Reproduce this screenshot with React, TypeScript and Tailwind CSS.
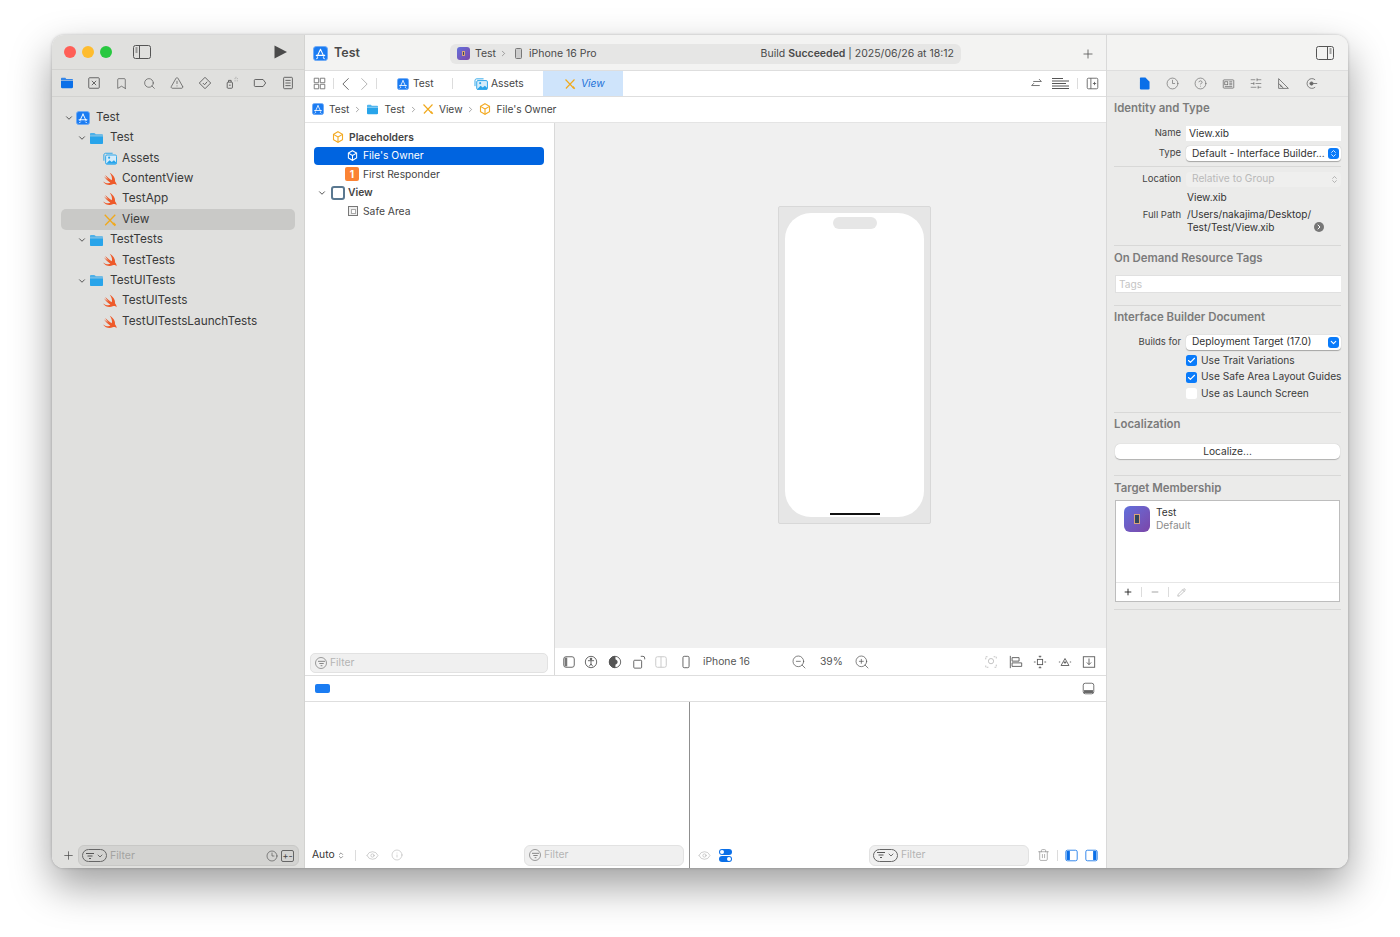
import {
  Bookmark,
  Check,
  ChevronDown,
  ChevronRight,
  ChevronsUpDown,
  CircleHelp,
  Clock3,
  Eye,
  Info,
  Minus,
  Pencil,
  Plus,
  Search,
  SlidersHorizontal,
  Trash2,
  TriangleAlert,
  ZoomIn,
  ZoomOut,
} from 'lucide-react';

type IconProps = { className?: string };

// --- drawn icons ---
const AppIcon = ({ className = 'w-[14px] h-[14px]' }: IconProps) => (
  <svg viewBox="0 0 16 16" className={`${className} shrink-0`}>
    <rect x="0.5" y="0.5" width="15" height="15" rx="3" fill="#1b7cf2" stroke="#6eaaf5" />
    <path d="M8 3.5 4.5 11M8 3.5l3.5 7.5M3.5 10h9M5 12.5l-1 1M11 12.5l1 1" stroke="#fff" strokeWidth="1.1" fill="none" strokeLinecap="round" />
  </svg>
);

const FolderIcon = ({ className = 'w-[15px] h-[13px]', fill = '#28a4ea' }: IconProps & { fill?: string }) => (
  <svg viewBox="0 0 16 14" className={`${className} shrink-0`}>
    <path d="M1 3V2.2C1 1.5 1.5 1 2.2 1h3.2c.5 0 .8.2 1.1.5l.7.8H14c.6 0 1 .4 1 1V4H1z" fill={fill} opacity="0.8" />
    <path d="M1 4.6h14v7.2c0 .7-.5 1.2-1.2 1.2H2.2C1.500 13 1 12.500 1 11.800z" fill={fill} />
  </svg>
);

const AssetsIcon = ({ className = 'w-[14px] h-[13px]' }: IconProps) => (
  <svg viewBox="0 0 16 14" className={`${className} shrink-0`} fill="none" stroke="#28a4ea" strokeWidth="1.1">
    <path d="M1 9.500V3c0-1 .7-2 1.800-2H11" />
    <rect x="3" y="3" width="12.500" height="10.500" rx="1.500" fill="#d5ecfa" />
    <path d="M3.500 13l4-4 2.500 2 2.500-2 2.500 2.500V13z" fill="#28a4ea" stroke="none" />
    <circle cx="7" cy="6" r="1.200" fill="#28a4ea" stroke="none" />
  </svg>
);

const SwiftIcon = ({ className = 'w-[14px] h-[14px]' }: IconProps) => (
  <svg viewBox="0.5 1 14.500 14" className={`${className} shrink-0`}>
    <path
      d="M.5 10.500C3.500 12.500 6 12.800 8.200 12 5.500 10 3 7.500 1.500 5.200 3.500 7 5.500 8.500 7 9.300 5.200 7.800 3.600 5.800 2.800 3.800 5 6 7.500 8 9.600 9.300 10.300 7 9.500 4.300 7.500 1.500c3.500 2 6 5.500 5.400 8.800 1.100 1.200 1.900 2.700 1.600 4.200-1-1.500-2.500-1.700-4-1-3.500 1.500-7.500.5-10-3z"
      fill="#ee5a2a"
    />
  </svg>
);

const XibIcon = ({ className = 'w-[14px] h-[14px]' }: IconProps) => (
  <svg viewBox="0 0 16 16" className={`${className} shrink-0`} fill="none" stroke="#f0a91d">
    <path d="M2 2l9.500 10" strokeWidth="1.500" />
    <path d="M14 2 2.500 14" strokeWidth="1.500" />
    <path d="M10.500 12.500l2-2 2.500 3-1.500 1.500z" fill="#f0a91d" stroke="none" />
  </svg>
);

const OwnerIcon = ({ className = 'w-[12px] h-[12px]', color = '#f3ab25' }: IconProps & { color?: string }) => (
  <svg viewBox="0 0 16 16" className={`${className} shrink-0`} fill="none" stroke={color} strokeWidth="1.500">
    <path d="M8 1l6 3.500v7L8 15l-6-3.500v-7z" />
    <path d="M8 8V15M8 8 2 4.500M8 8l6-3.500" />
  </svg>
);

const PanelIcon = ({ side, className = 'w-[18px] h-[14px]' }: IconProps & { side: 'left' | 'right' }) => (
  <svg viewBox="0 0 18 14" className={`${className} shrink-0`} fill="none" stroke="#555" strokeWidth="1">
    <rect x="0.500" y="0.500" width="17" height="13" rx="2" />
    {side === 'left' ? <path d="M6.500 0.500v13M2.500 3h2M2.500 5h2M2.500 7h2" /> : <path d="M11.500 0.500v13M13.500 3h2M13.500 5h2M13.500 7h2" />}
  </svg>
);

const TinyPhoneApp = ({ className }: IconProps) => (
  <div className={`${className} bg-gradient-to-br from-[#5f6fdc] to-[#7b45a8] flex items-center justify-center shrink-0`}>
    <div className="w-[25%] h-[36%] bg-[#32465c] border border-[#d9a27a]" />
  </div>
);

const Stroke = ({ children, className = 'w-[14px] h-[14px]', vb = '0 0 16 16', color = '#555' }: IconProps & { children: React.ReactNode; vb?: string; color?: string }) => (
  <svg viewBox={vb} className={`${className} shrink-0`} fill="none" stroke={color} strokeWidth="1">
    {children}
  </svg>
);

const FilterPill = () => (
  <div className="w-[25px] h-[13px] rounded-full border border-[#666] flex items-center justify-center gap-[2px] shrink-0">
    <Stroke className="w-[8px] h-[8px]" vb="0 0 8 8" color="#555">
      <path d="M0 1.500h8M1.500 4h5M3 6.500h2" />
    </Stroke>
    <ChevronDown className="w-[8px] h-[8px] text-[#555]" strokeWidth={2.5} />
  </div>
);

const RoundFilter = () => (
  <div className="w-[12px] h-[12px] rounded-full border border-[#9a9a9a] flex items-center justify-center shrink-0">
    <Stroke className="w-[7px] h-[7px]" vb="0 0 8 8" color="#777">
      <path d="M0 1.500h8M1.500 4h5M3 6.500h2" />
    </Stroke>
  </div>
);

// --- left navigator ---
const treeRows = [
  { level: 0, name: 'Test', icon: <AppIcon /> },
  { level: 1, name: 'Test', icon: <FolderIcon /> },
  { level: 2, name: 'Assets', icon: <AssetsIcon /> },
  { level: 2, name: 'ContentView', icon: <SwiftIcon /> },
  { level: 2, name: 'TestApp', icon: <SwiftIcon /> },
  { level: 2, name: 'View', icon: <XibIcon />, selected: true },
  { level: 1, name: 'TestTests', icon: <FolderIcon /> },
  { level: 2, name: 'TestTests', icon: <SwiftIcon /> },
  { level: 1, name: 'TestUITests', icon: <FolderIcon /> },
  { level: 2, name: 'TestUITests', icon: <SwiftIcon /> },
  { level: 2, name: 'TestUITestsLaunchTests', icon: <SwiftIcon /> },
];

const levelClass = ['pl-[4px]', 'pl-[17px]', 'pl-[42px]'];

const Navigator = () => (
  <aside className="w-[253px] shrink-0 bg-[#e0e0de] flex flex-col border-r border-[#d3d3d1]">
    <div className="h-[35px] shrink-0 flex items-center pl-[12px] border-b border-[#d2d2d0]">
      <div className="w-[12px] h-[12px] rounded-full bg-[#ff5f57]" />
      <div className="w-[12px] h-[12px] rounded-full bg-[#febc2e] ml-[6px]" />
      <div className="w-[12px] h-[12px] rounded-full bg-[#28c840] ml-[6px]" />
      <div className="ml-[21px]">
        <PanelIcon side="left" />
      </div>
      <svg viewBox="0 0 13 14" className="w-[13px] h-[14px] ml-auto mr-[17px]">
        <path d="M.5.500 13 7 .5 13.500z" fill="#4a4a4a" />
      </svg>
    </div>
    <div className="h-[27px] shrink-0 flex items-center pl-[1px] border-b border-[#d2d2d0]">
      <div className="w-[27.600px] flex justify-center">
        <FolderIcon className="w-[14px] h-[12px]" fill="#0a6fe8" />
      </div>
      <div className="w-[27.600px] flex justify-center">
        <Stroke>
          <rect x="2" y="2" width="12" height="12" rx="1" />
          <path d="M5.500 5.500l5 5M10.500 5.500l-5 5" />
        </Stroke>
      </div>
      <div className="w-[27.600px] flex justify-center">
        <Bookmark className="w-[13px] h-[13px] text-[#555]" strokeWidth={1.3} />
      </div>
      <div className="w-[27.600px] flex justify-center">
        <Search className="w-[13px] h-[13px] text-[#555]" strokeWidth={1.3} />
      </div>
      <div className="w-[27.600px] flex justify-center">
        <TriangleAlert className="w-[14px] h-[14px] text-[#555]" strokeWidth={1.3} />
      </div>
      <div className="w-[27.600px] flex justify-center">
        <Stroke>
          <path d="M8 1.500 14.500 8 8 14.500 1.500 8z" strokeLinejoin="round" />
          <path d="M5.500 8l2 2 3-3.500" />
        </Stroke>
      </div>
      <div className="w-[27.600px] flex justify-center">
        <Stroke>
          <rect x="2.500" y="7" width="6" height="7" rx="1" />
          <path d="M4 7V5h3v2M4.500 10.500h2" />
          <path d="M11 3h1M13.500 3h1M11 5.500h1M13.500 5.500h1M12 1.500h1" stroke="#999" />
        </Stroke>
      </div>
      <div className="w-[27.600px] flex justify-center">
        <Stroke>
          <path d="M2.500 4h9l3 4-3 4h-9c-.6 0-1-.4-1-1V5c0-.6.4-1 1-1z" />
        </Stroke>
      </div>
      <div className="w-[27.600px] flex justify-center">
        <Stroke>
          <rect x="3" y="1.500" width="10" height="13" rx="1" />
          <path d="M5 5h6M5 8h6M5 11h6" />
        </Stroke>
      </div>
    </div>
    <div className="flex-1 pt-[10.500px] px-[9px]">
      {treeRows.map((row, i) => (
        <div
          key={i}
          className={`h-[20.400px] flex items-center rounded-[5px] text-[11.800px] text-[#3a3a3a] ${levelClass[row.level]} ${row.selected ? 'bg-[#c9c9c7]' : ''}`}
        >
          {row.level < 2 && <ChevronDown className="w-[10px] h-[10px] mr-[2px] -ml-[1px] text-[#555]" strokeWidth={2.4} />}
          {row.icon}
          <span className={row.level === 2 ? 'ml-[5px]' : 'ml-[6px]'}>{row.name}</span>
        </div>
      ))}
    </div>
    <div className="shrink-0 flex items-center pl-[10px] pr-[5px] pb-[2px]">
      <Plus className="w-[13px] h-[13px] text-[#444]" strokeWidth={1.3} />
      <div className="ml-[3px] flex-1 h-[21px] rounded-[6px] bg-[#d3d3d1] border border-[#c8c8c6] flex items-center pl-[3px] pr-[4px] text-[10.500px] text-[#a3a3a1]">
        <FilterPill />
        <span className="ml-[3px]">Filter</span>
        <Clock3 className="w-[12px] h-[12px] ml-auto text-[#444]" strokeWidth={1.2} />
        <div className="ml-[3px] w-[13px] h-[12px] rounded-[2px] border border-[#666] text-[9px] leading-[10px] text-center text-[#444]">+-</div>
      </div>
    </div>
  </aside>
);

// --- center editor ---
const Divider = ({ className = 'h-[12px]' }: IconProps) => <div className={`w-px bg-[#dcdcdc] shrink-0 ${className}`} />;

const Crumb = ({ icon, label }: { icon: React.ReactNode; label: string }) => (
  <div className="flex items-center">
    {icon}
    <span className="ml-[5px]">{label}</span>
  </div>
);

const Sep = () => <ChevronRight className="w-[9px] h-[9px] mx-[4px] text-[#666]" strokeWidth={1.5} />;

const outlineRow = 'h-[18.500px] flex items-center';

const Outline = () => (
  <div className="w-[250px] shrink-0 bg-white border-r border-[#d9d9d9] flex flex-col text-[10.300px] text-[#444]">
    <div className="pt-[5px] flex-1">
      <div className={`${outlineRow} pl-[27px] font-semibold`}>
        <OwnerIcon />
        <span className="ml-[5px]">Placeholders</span>
      </div>
      <div className={`${outlineRow} ml-[9px] mr-[10px] pl-[33px] bg-[#0064e0] rounded-[4px] text-white`}>
        <OwnerIcon className="w-[11px] h-[11px]" color="#fff" />
        <span className="ml-[5px]">File's Owner</span>
      </div>
      <div className={`${outlineRow} pl-[40px]`}>
        <div className="w-[14px] h-[14px] rounded-[2px] bg-[#fb8334] text-white text-[10px] font-bold text-center leading-[14px]">1</div>
        <span className="ml-[4px]">First Responder</span>
      </div>
      <div className={`${outlineRow} pl-[12px] font-semibold`}>
        <ChevronDown className="w-[10px] h-[10px] text-[#555]" strokeWidth={2.4} />
        <div className="ml-[4px] w-[14px] h-[14px] rounded-[3px] border-2 border-[#5a7890] bg-white" />
        <span className="ml-[3px]">View</span>
      </div>
      <div className={`${outlineRow} pl-[43px]`}>
        <div className="w-[10px] h-[10px] border border-[#777] bg-[#eee] p-[1.500px]">
          <div className="w-full h-full border border-[#aaa] bg-white" />
        </div>
        <span className="ml-[5px]">Safe Area</span>
      </div>
    </div>
    <div className="h-[27px] shrink-0 px-[5px] pt-[5px]">
      <div className="w-[238px] h-[20px] rounded-[5px] bg-[#f0f0f0] border border-[#e2e2e2] flex items-center pl-[4px] text-[#b4b4b4]">
        <RoundFilter />
        <span className="ml-[3px]">Filter</span>
      </div>
    </div>
  </div>
);

const Canvas = () => (
  <div className="flex-1 flex flex-col min-w-0">
    <div className="flex-1 bg-[#f0f0f0] pt-[83px] pl-[223px]">
      <div className="w-[153px] h-[318px] bg-[#e6e6e6] border border-[#d8d8d8] rounded-[2px] p-[6px]">
        <div className="w-full h-full rounded-[26px] bg-white flex flex-col items-center justify-between pt-[4px] pb-[2px]">
          <div className="w-[44px] h-[12px] rounded-full bg-[#e6e6e6]" />
          <div className="w-[50px] h-[2px] bg-[#111]" />
        </div>
      </div>
    </div>
    <div className="h-[27px] shrink-0 bg-white flex items-center text-[10.300px] text-[#555] pl-[7px] pr-[10px]">
      <Stroke>
        <rect x="2" y="2" width="12" height="12" rx="2.500" />
        <rect x="3" y="3" width="3" height="10" fill="#777" stroke="none" />
      </Stroke>
      <div className="ml-[8px]">
        <Stroke>
          <circle cx="8" cy="8" r="6.500" />
          <circle cx="8" cy="4.500" r="1" fill="#555" />
          <path d="M4.500 6.500h7M8 6.500V10M8 10l-2 3M8 10l2 3" />
        </Stroke>
      </div>
      <div className="ml-[10px]">
        <Stroke>
          <circle cx="8" cy="8" r="6.500" />
          <path d="M8 1.500a6.500 6.500 0 0 0 0 13z" fill="#555" />
          <circle cx="8" cy="8" r="2.500" fill="#555" />
        </Stroke>
      </div>
      <div className="ml-[10px]">
        <Stroke>
          <rect x="2" y="6" width="9" height="9" rx="1" />
          <path d="M10 1.500h2.500a2 2 0 0 1 2 2V5" />
        </Stroke>
      </div>
      <div className="ml-[8px]">
        <Stroke color="#c4c4c4">
          <rect x="2" y="2" width="12" height="12" rx="2" />
          <path d="M8 2v12" />
        </Stroke>
      </div>
      <div className="ml-[11px]">
        <Stroke>
          <rect x="4.500" y="1.500" width="7" height="13" rx="1.500" />
        </Stroke>
      </div>
      <span className="ml-[10px]">iPhone 16</span>
      <ZoomOut className="ml-[41px] w-[16px] h-[16px]" strokeWidth={1.1} />
      <span className="ml-[13px]">39%</span>
      <ZoomIn className="ml-[11px] w-[16px] h-[16px]" strokeWidth={1.1} />
      <div className="ml-auto flex items-center gap-[10.500px]">
        <Stroke color="#bbb">
          <path d="M2 5V2h3M11 2h3v3M14 11v3h-3M5 14H2v-3" strokeDasharray="2 1" />
          <circle cx="8" cy="7" r="3" />
        </Stroke>
        <Stroke>
          <path d="M1.500 1v14M3.500 3h8v4h-8zM3.500 9h11v4h-11z" />
        </Stroke>
        <Stroke>
          <rect x="5" y="5" width="6" height="6" />
          <path d="M8 1v2M6.500 1.500h3M8 13v2M6.500 14.500h3M1 8h2M13 8h2" />
        </Stroke>
        <Stroke>
          <path d="M8 4l4.500 8h-9z" />
          <path d="M1 8h1.500M13.500 8H15M8 7v3M6.500 8.500h3" />
        </Stroke>
        <Stroke>
          <rect x="1.500" y="2" width="13" height="12" />
          <path d="M8 4v7M5.500 8.500 8 11l2.500-2.500" />
        </Stroke>
      </div>
    </div>
  </div>
);

const Editor = () => (
  <main className="flex-1 min-w-0 flex flex-col border-r border-[#d9d9d9]">
    <div className="h-[36px] shrink-0 bg-[#f3f3f2] border-b border-[#dedede] flex items-center pt-[2px] pl-[8px] pr-[11px]">
      <AppIcon className="w-[15px] h-[15px]" />
      <span className="ml-[6px] text-[12.500px] font-semibold text-[#4a4a4a]">Test</span>
      <div className="ml-[90px] w-[511px] h-[20px] rounded-[6px] bg-[#e6e6e5] flex items-center pl-[7px] pr-[7px] text-[10.500px] text-[#4a4a4a]">
        <TinyPhoneApp className="w-[13px] h-[13px] rounded-[3px]" />
        <span className="ml-[5px]">Test</span>
        <ChevronRight className="w-[9px] h-[9px] ml-[3px] text-[#666]" strokeWidth={1.5} />
        <div className="ml-[7px] w-[7px] h-[11px] rounded-[1.500px] border border-[#777] bg-[#ccc]" />
        <span className="ml-[7px]">iPhone 16 Pro</span>
        <span className="ml-auto">
          Build <b className="font-semibold">Succeeded</b> | 2025/06/26 at 18:12
        </span>
      </div>
      <Plus className="ml-auto w-[14px] h-[14px] text-[#555]" strokeWidth={1.4} />
    </div>
    <div className="h-[26px] shrink-0 bg-white border-b border-[#dedede] flex items-center text-[10.300px] text-[#444] pl-[8px] pr-[7px]">
      <Stroke className="w-[13px] h-[13px]" color="#666">
        <path d="M1.500 1.500h5.500v5.500h-5.500zM9 1.500h5.500v5.500H9zM1.500 9h5.500v5.500h-5.500zM9 9h5.500v5.500H9z" />
      </Stroke>
      <Divider className="h-[11px] ml-[7px]" />
      <Stroke className="ml-[7px] w-[9px] h-[14px]" vb="0 0 10 16" color="#555">
        <path d="M8.500 1.500 2 8l6.500 6.500" />
      </Stroke>
      <Stroke className="ml-[10px] w-[9px] h-[14px]" vb="0 0 10 16" color="#aaa">
        <path d="M1.500 1.500 8 8l-6.500 6.500" />
      </Stroke>
      <Divider className="h-[11px] ml-[7px]" />
      <AppIcon className="ml-[20px] w-[12px] h-[12px]" />
      <span className="ml-[4px] w-[34px]">Test</span>
      <Divider className="h-[11px] ml-[5px]" />
      <AssetsIcon className="ml-[21px] w-[14px] h-[12px]" />
      <span className="ml-[3px] w-[52px]">Assets</span>
      <div className="h-full w-[80px] bg-[#cfe4fb] flex items-center pl-[21px] italic text-[#1f73d8]">
        <XibIcon className="w-[12px] h-[12px]" />
        <span className="ml-[5px]">View</span>
      </div>
      <div className="ml-auto flex items-center">
        <Stroke className="w-[13px] h-[13px]">
          <path d="M4 5.500h10M11 2.500l3 3M12 10.500H2M5 7.500l-3 3" />
        </Stroke>
        <Stroke className="ml-[9px] w-[17px] h-[13px]" vb="0 0 17 13">
          <path d="M0 1.500h11M0 4h17M0 6.500h14M0 9h17M0 11.500h17" />
        </Stroke>
        <Divider className="h-[11px] ml-[8px]" />
        <Stroke className="ml-[8px] w-[13px] h-[13px]">
          <rect x="1.500" y="1.500" width="13" height="13" rx="1.500" />
          <path d="M6 1.500v13M8.500 8h4M10.500 6v4" />
        </Stroke>
      </div>
    </div>
    <div className="h-[26px] shrink-0 bg-white border-b border-[#e4e4e4] flex items-center pl-[7px] text-[10.200px] text-[#444]">
      <Crumb icon={<AppIcon className="w-[12px] h-[12px]" />} label="Test" />
      <Sep />
      <Crumb icon={<FolderIcon className="w-[13px] h-[11px]" />} label="Test" />
      <Sep />
      <Crumb icon={<XibIcon className="w-[12px] h-[12px]" />} label="View" />
      <Sep />
      <Crumb icon={<OwnerIcon />} label="File's Owner" />
    </div>
    <div className="h-[553px] shrink-0 flex border-b border-[#dedede]">
      <Outline />
      <Canvas />
    </div>
    <div className="h-[26px] shrink-0 bg-white border-b border-[#dedede] flex items-center pl-[10px] pr-[11px]">
      <div className="w-[15px] h-[9px] rounded-[2px] bg-[#1b7cf2]" />
      <Stroke className="ml-auto w-[13px] h-[13px]">
        <rect x="1.500" y="1.500" width="13" height="13" rx="2.500" />
        <rect x="2.500" y="10" width="11" height="3.500" fill="#666" stroke="none" />
      </Stroke>
    </div>
    <div className="flex-1 min-h-0 flex bg-white">
      <div className="w-[385px] shrink-0 border-r border-[#8f8f8f] flex flex-col">
        <div className="flex-1" />
        <div className="h-[26px] flex items-center pl-[7px] pr-[5px] text-[10.300px] text-[#333]">
          <span>Auto</span>
          <ChevronsUpDown className="w-[8px] h-[9px] ml-[2px]" strokeWidth={1.5} />
          <Divider className="h-[11px] ml-[10px]" />
          <Eye className="ml-[9px] w-[15px] h-[13px] text-[#b5b5b5]" strokeWidth={1.2} />
          <Info className="ml-[11px] w-[12px] h-[12px] text-[#b5b5b5]" strokeWidth={1.2} />
          <div className="ml-auto w-[160px] h-[21px] rounded-[6px] bg-[#f0f0f0] border border-[#e2e2e2] flex items-center pl-[4px] text-[#b4b4b4]">
            <RoundFilter />
            <span className="ml-[3px]">Filter</span>
          </div>
        </div>
      </div>
      <div className="flex-1 flex flex-col">
        <div className="flex-1" />
        <div className="h-[26px] flex items-center pl-[7px] pr-[8px] text-[10.300px]">
          <Eye className="w-[15px] h-[13px] text-[#b5b5b5]" strokeWidth={1.2} />
          <div className="ml-[7px] w-[13px] flex flex-col gap-[1px]">
            <div className="h-[6px] rounded-full bg-[#0a6fe8] pl-[1px] flex items-center">
              <div className="w-[4px] h-[4px] rounded-full bg-white" />
            </div>
            <div className="h-[6px] rounded-full bg-[#0a6fe8] pr-[1px] flex items-center justify-end">
              <div className="w-[4px] h-[4px] rounded-full bg-white" />
            </div>
          </div>
          <div className="ml-[137px] w-[160px] h-[21px] rounded-[6px] bg-[#f0f0f0] border border-[#e2e2e2] flex items-center pl-[3px] text-[#b4b4b4]">
            <FilterPill />
            <span className="ml-[3px]">Filter</span>
          </div>
          <Trash2 className="ml-[8px] w-[13px] h-[14px] text-[#888]" strokeWidth={1.2} />
          <Divider className="h-[11px] ml-[7px]" />
          <Stroke className="ml-[7px] w-[13px] h-[13px]" color="#0a6fe8">
            <rect x="1" y="1.500" width="14" height="13" rx="2" />
            <rect x="2" y="2.500" width="4" height="11" fill="#0a6fe8" stroke="none" />
          </Stroke>
          <Stroke className="ml-[7px] w-[13px] h-[13px]" color="#0a6fe8">
            <rect x="1" y="1.500" width="14" height="13" rx="2" />
            <rect x="10" y="2.500" width="4" height="11" fill="#0a6fe8" stroke="none" />
          </Stroke>
        </div>
      </div>
    </div>
  </main>
);

// --- right inspector ---
const SectionTitle = ({ children }: { children: React.ReactNode }) => (
  <div className="text-[11.400px] font-semibold text-[#7b7b7b] leading-[14px]">{children}</div>
);

const FormRow = ({ label, children, className = '' }: { label: string; children: React.ReactNode; className?: string }) => (
  <div className={`flex items-center ${className}`}>
    <div className="w-[67px] text-right text-[9.500px] text-[#444] shrink-0">{label}</div>
    <div className="ml-[5px] flex-1 min-w-0">{children}</div>
  </div>
);

const StepperBadge = () => (
  <div className="ml-auto w-[11px] h-[11px] rounded-[3px] bg-[#0a7bfa] flex items-center justify-center shrink-0">
    <ChevronsUpDown className="w-[9px] h-[9px] text-white" strokeWidth={2.2} />
  </div>
);

const CheckRow = ({ label, checked }: { label: string; checked: boolean }) => (
  <div className="h-[16.700px] pl-[72px] flex items-center text-[10.200px] text-[#3a3a3a] whitespace-nowrap">
    <div className={`w-[11px] h-[11px] rounded-[2.500px] shrink-0 flex items-center justify-center ${checked ? 'bg-[#0a7bfa]' : 'bg-white'}`}>
      {checked && <Check className="w-[9px] h-[9px] text-white" strokeWidth={3} />}
    </div>
    <span className="ml-[4px]">{label}</span>
  </div>
);

const Rule = () => <div className="h-px shrink-0 bg-[#d8d8d7]" />;

const inspectorIcon = 'w-[27.800px] flex justify-center';

const Inspector = () => (
  <aside className="w-[241px] shrink-0 bg-[#ebebea] flex flex-col">
    <div className="h-[36px] shrink-0 bg-[#f3f3f2] border-b border-[#dedede] flex items-center justify-end pr-[14px]">
      <PanelIcon side="right" />
    </div>
    <div className="h-[26px] shrink-0 border-b border-[#dedede] flex items-center pl-[24px]">
      <div className={inspectorIcon}>
        <svg viewBox="0 0 12 14" className="w-[11px] h-[13px]">
          <path d="M1 1.500C1 .9 1.500.5 2 .5h5l4.500 4.500v7.500c0 .6-.5 1-1 1H2c-.5 0-1-.4-1-1z" fill="#0a6fe8" />
        </svg>
      </div>
      <div className={inspectorIcon}>
        <Clock3 className="w-[13px] h-[13px] text-[#666]" strokeWidth={1.2} />
      </div>
      <div className={inspectorIcon}>
        <CircleHelp className="w-[13px] h-[13px] text-[#666]" strokeWidth={1.2} />
      </div>
      <div className={inspectorIcon}>
        <Stroke className="w-[13px] h-[12px]" color="#666">
          <rect x="1" y="2.500" width="14" height="11" rx="1" />
          <rect x="3" y="5" width="4" height="4" />
          <path d="M9 5h4M9 7h4M9 9h4M3 11.500h10" />
        </Stroke>
      </div>
      <div className={inspectorIcon}>
        <SlidersHorizontal className="w-[14px] h-[13px] text-[#666]" strokeWidth={1.2} />
      </div>
      <div className={inspectorIcon}>
        <Stroke className="w-[13px] h-[13px]" color="#666">
          <path d="M2 2v12h12zM2 8l6 6M4.500 9.500v2h2" />
        </Stroke>
      </div>
      <div className={inspectorIcon}>
        <Stroke className="w-[13px] h-[13px]" color="#666">
          <path d="M12.500 3.500a6 6 0 1 0 0 9" />
          <circle cx="8" cy="8" r="2" fill="#666" />
          <path d="M10 8h5" />
        </Stroke>
      </div>
    </div>

    <div className="flex-1 px-[7px] flex flex-col">
      <div className="pt-[4px] h-[27px]">
        <SectionTitle>Identity and Type</SectionTitle>
      </div>
      <FormRow label="Name" className="h-[19px]">
        <div className="h-[15px] bg-white pl-[3px] text-[10.200px] leading-[15px] text-[#333]">View.xib</div>
      </FormRow>
      <FormRow label="Type" className="h-[21px]">
        <div className="h-[15px] bg-white rounded-[4px] shadow-[0_0.500px_1px_rgba(0,0,0,0.3)] pl-[6px] pr-[2px] flex items-center text-[10.200px] text-[#333] whitespace-nowrap">
          <span>Default - Interface Builder...</span>
          <StepperBadge />
        </div>
      </FormRow>
      <div className="h-[2px]" />
      <Rule />
      <FormRow label="Location" className="h-[24px]">
        <div className="h-[15px] bg-[#efefee] rounded-[4px] pl-[6px] pr-[2px] flex items-center text-[10.200px] text-[#b9b9b9]">
          <span>Relative to Group</span>
          <ChevronsUpDown className="ml-auto w-[9px] h-[9px] text-[#888]" strokeWidth={1.5} />
        </div>
      </FormRow>
      <div className="pl-[73px] h-[13px] text-[10.100px] leading-[13px] text-[#333]">View.xib</div>
      <div className="h-[3.500px]" />
      <div className="flex text-[10.100px] text-[#333] leading-[13px]">
        <div className="w-[67px] text-right text-[9.500px] text-[#444] shrink-0">Full Path</div>
        <div className="ml-[6px] flex-1 relative">
          /Users/nakajima/Desktop/
          <br />
          Test/Test/View.xib
          <div className="absolute right-[17px] top-[14.500px] w-[10px] h-[10px] rounded-full bg-[#777] flex items-center justify-center">
            <ChevronRight className="w-[8px] h-[8px] text-white" strokeWidth={3} />
          </div>
        </div>
      </div>
      <div className="h-[11.500px]" />
      <Rule />

      <div className="pt-[5px] h-[29px]">
        <SectionTitle>On Demand Resource Tags</SectionTitle>
      </div>
      <div className="h-[18px] bg-white border-l border-t border-[#e0e0e0] border-b pl-[3px] text-[10.200px] leading-[16px] text-[#c4c4c4] ml-[1px]">Tags</div>
      <div className="h-[12px]" />
      <Rule />

      <div className="pt-[4px] h-[27px]">
        <SectionTitle>Interface Builder Document</SectionTitle>
      </div>
      <FormRow label="Builds for" className="h-[18px]">
        <div className="h-[15px] bg-white rounded-[4px] shadow-[0_0.500px_1px_rgba(0,0,0,0.3)] pl-[6px] pr-[2px] flex items-center text-[10.200px] text-[#333]">
          <span>Deployment Target (17.0)</span>
          <div className="ml-auto w-[11px] h-[11px] rounded-[3px] bg-[#0a7bfa] flex items-center justify-center">
            <ChevronDown className="w-[9px] h-[9px] text-white" strokeWidth={3} />
          </div>
        </div>
      </FormRow>
      <div className="pt-[1px]">
        <CheckRow label="Use Trait Variations" checked />
        <CheckRow label="Use Safe Area Layout Guides" checked />
        <CheckRow label="Use as Launch Screen" checked={false} />
      </div>
      <div className="h-[10px]" />
      <Rule />

      <div className="pt-[4px] h-[31px]">
        <SectionTitle>Localization</SectionTitle>
      </div>
      <div className="h-[15px] mx-[1px] bg-white rounded-[5px] shadow-[0_0.500px_1px_rgba(0,0,0,0.25)] text-center text-[10.200px] leading-[15px] text-[#333]">Localize...</div>
      <div className="h-[16px]" />
      <Rule />

      <div className="pt-[5px] h-[24px]">
        <SectionTitle>Target Membership</SectionTitle>
      </div>
      <div className="h-[102px] mx-[1px] bg-white border border-[#bdbdbd] flex flex-col">
        <div className="flex-1 flex items-start pt-[5px] pl-[8px]">
          <TinyPhoneApp className="w-[26px] h-[26px] rounded-[6px]" />
          <div className="ml-[6px] text-[10.200px] leading-[13px] text-[#333]">
            <div>Test</div>
            <div className="text-[#8b8b8b]">Default</div>
          </div>
        </div>
        <div className="h-[19px] border-t border-[#e6e6e6] flex items-center pl-[7px]">
          <Plus className="w-[10px] h-[10px] text-[#222]" strokeWidth={2.2} />
          <Divider className="h-[10px] ml-[8px]" />
          <Minus className="ml-[8px] w-[10px] h-[10px] text-[#888]" strokeWidth={1.8} />
          <Divider className="h-[10px] ml-[8px]" />
          <Pencil className="ml-[8px] w-[9px] h-[9px] text-[#999]" strokeWidth={1.5} />
        </div>
      </div>
      <div className="h-[7px]" />
      <Rule />
    </div>
  </aside>
);

export default function App() {
  return (
    <div className="w-full h-screen bg-white overflow-hidden pt-[35px] pl-[52px] font-['Inter',sans-serif]">
      <div className="w-[1296px] h-[833px] rounded-[12px] overflow-hidden flex shadow-[0_18px_40px_rgba(0,0,0,0.38),0_0_3px_rgba(0,0,0,0.25)]">
        <Navigator />
        <Editor />
        <Inspector />
      </div>
    </div>
  );
}
